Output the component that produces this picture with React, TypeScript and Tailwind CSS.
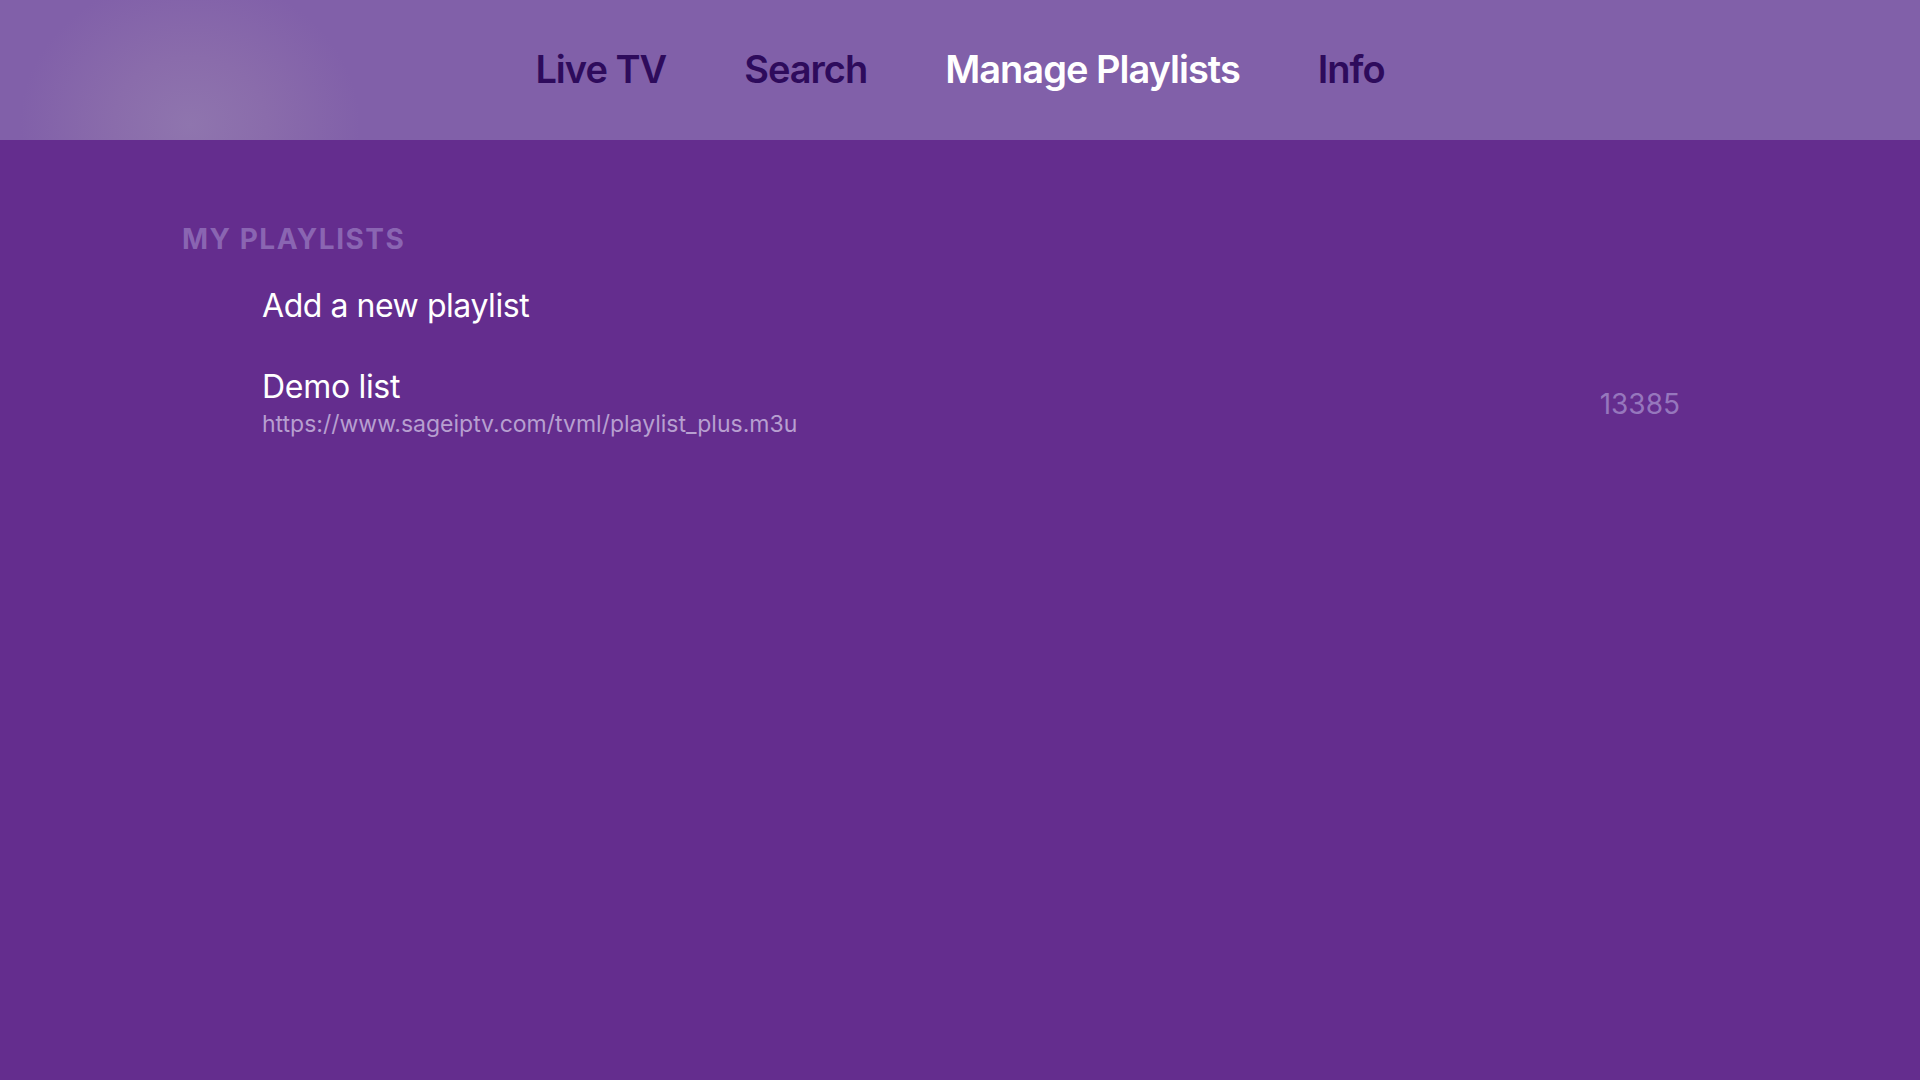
import React from "react";

export default function App() {
  const font = { fontFamily: "Inter, 'Noto Sans', sans-serif" };
  return (
    <div className="w-[1920px] h-[1080px] bg-[#642d8e] flex flex-col overflow-hidden" style={font}>
      <header className="h-[140px] shrink-0 bg-[#8160a9] bg-[radial-gradient(ellipse_170px_150px_at_190px_125px,_#8f75ae_0%,_#8a6cab_45%,_#8160a9_100%)] flex justify-center items-start pt-[50px] gap-[78px]">
        <span className="text-[38px] leading-none font-semibold text-[#2e0b5c] tracking-[-1px]">Live TV</span>
        <span className="text-[38px] leading-none font-semibold text-[#2e0b5c] tracking-[-1px]">Search</span>
        <span className="text-[38px] leading-none font-semibold text-white tracking-[-1px]">Manage Playlists</span>
        <span className="text-[38px] leading-none font-semibold text-[#2e0b5c] tracking-[-1px]">Info</span>
      </header>
      <main className="flex flex-col pl-[182px] pr-[240px] pt-[85px]">
        <h2 className="text-[28px] leading-none font-bold tracking-[1.5px] text-[#8a65b2]">MY PLAYLISTS</h2>
        <div className="flex flex-col pl-[80px] pt-[37px] gap-[49px]">
          <div className="text-[32px] leading-none tracking-[-0.45px] text-white">Add a new playlist</div>
          <div className="flex items-center justify-between">
            <div className="flex flex-col gap-[10px]">
              <div className="text-[32px] leading-none tracking-[-0.3px] text-white">Demo list</div>
              <div className="text-[23px] leading-none text-[#b79fd0]">https://www.sageiptv.com/tvml/playlist_plus.m3u</div>
            </div>
            <div className="text-[28px] leading-none text-[#9677bd]">13385</div>
          </div>
        </div>
      </main>
    </div>
  );
}
